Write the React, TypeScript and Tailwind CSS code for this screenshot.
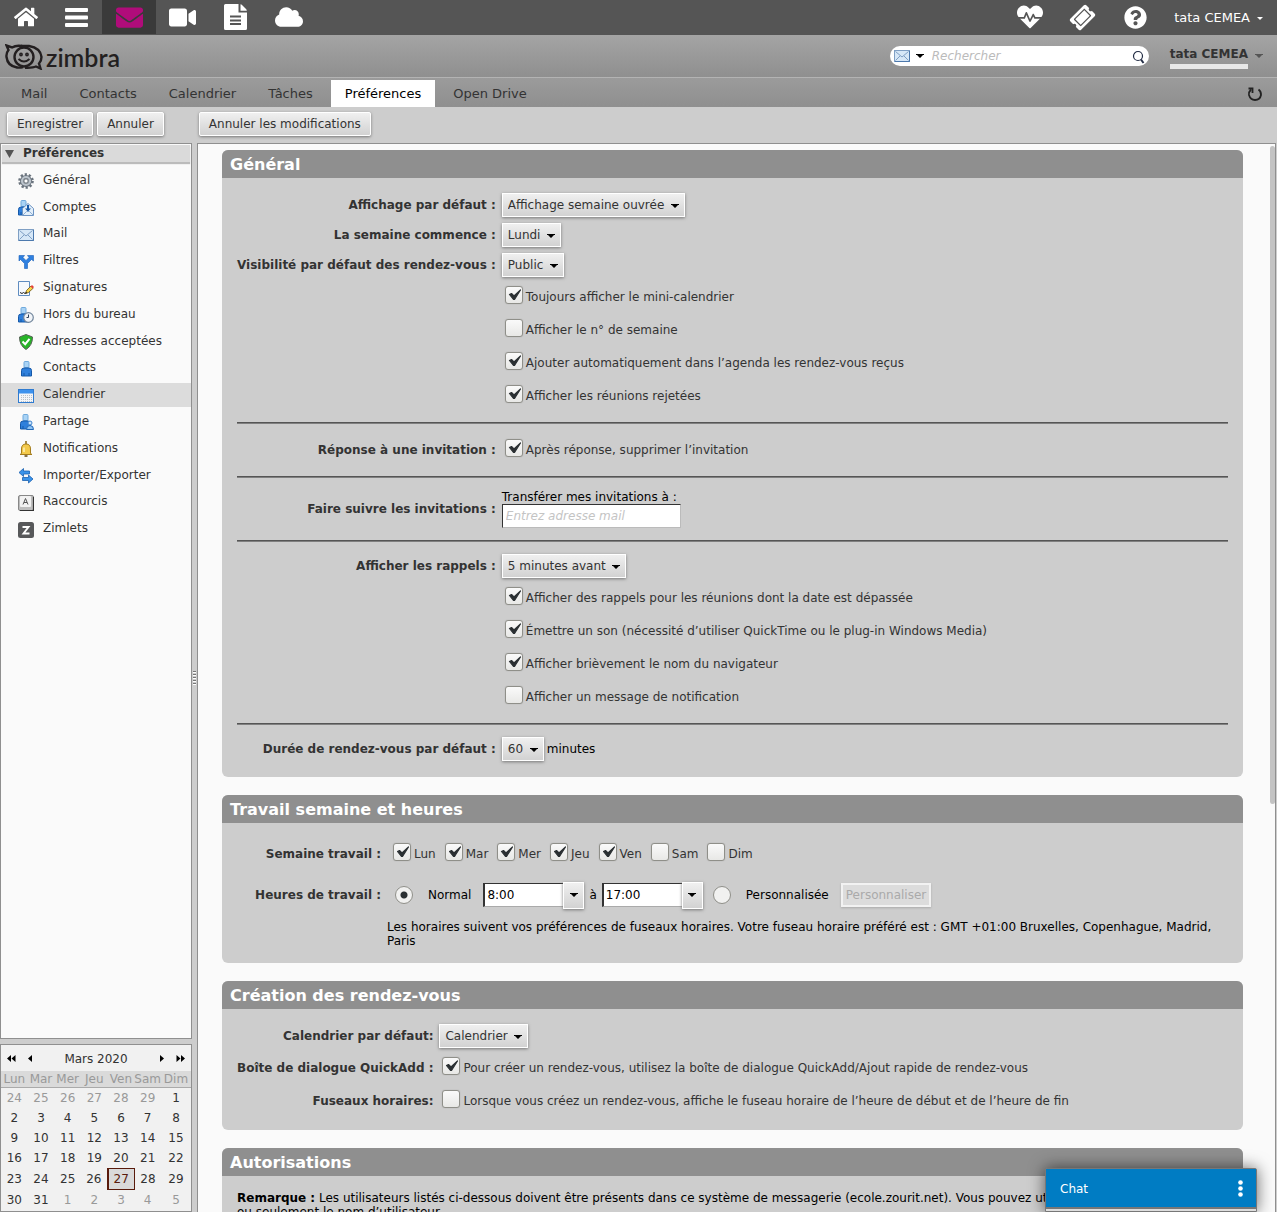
import type { ReactNode } from "react";
import {
  FaBars,
  FaCloud,
  FaEnvelope,
  FaHeartbeat,
  FaHome,
  FaQuestionCircle,
  FaTicketAlt,
  FaVideo,
} from "react-icons/fa";

const tabs = ["Mail", "Contacts", "Calendrier", "Tâches", "Préférences", "Open Drive"];

const weekDays = ["Lun", "Mar", "Mer", "Jeu", "Ven", "Sam", "Dim"];

const weeks = [
  [24, 25, 26, 27, 28, 29, 1],
  [2, 3, 4, 5, 6, 7, 8],
  [9, 10, 11, 12, 13, 14, 15],
  [16, 17, 18, 19, 20, 21, 22],
  [23, 24, 25, 26, 27, 28, 29],
  [30, 31, 1, 2, 3, 4, 5],
];

function Person({ x = 3 }: { x?: number }) {
  return (
    <g transform={`translate(${x} 0)`}>
      <rect x="3" y="0.5" width="5" height="6" rx="1" fill="#a9d3f5" stroke="#6fa9dc" />
      <path d="M0.5 15V9.5Q0.5 7 3 7H8Q10.5 7 10.5 9.5V15Z" fill="#2f80dc" stroke="#1558a8" />
      <path d="M3 12V15M8 12V15" stroke="#1558a8" />
    </g>
  );
}

function Letter() {
  return (
    <g>
      <rect x="0.5" y="2.5" width="15" height="11" fill="#d6e7f7" stroke="#7f9fc4" />
      <path d="M1.5 3.5L8 9L14.5 3.5M1.5 12.5L6 8M14.5 12.5L10 8" fill="none" stroke="#7f9fc4" />
      <path d="M1 13.5H15.5V3" fill="none" stroke="#4d79ad" />
    </g>
  );
}

const menu: { label: string; icon: ReactNode }[] = [
  {
    label: "Général",
    icon: (
      <g>
        <circle cx="8" cy="8" r="6.5" fill="none" stroke="#6a737d" strokeWidth="2.6" strokeDasharray="2.2 1.88" />
        <circle cx="8" cy="8" r="4.3" fill="#fff" stroke="#6c757f" strokeWidth="3.4" />
        <circle cx="8" cy="8" r="4" fill="none" stroke="#bcc4cc" strokeWidth="2.2" />
        <circle cx="8" cy="8" r="2.2" fill="#fff" stroke="#59626c" />
      </g>
    ),
  },
  {
    label: "Comptes",
    icon: (
      <g>
        <Person x={0} />
        <path d="M4.5 8.5L10 3.5L15.5 8.5V15.5H4.5Z" fill="#e3effa" stroke="#6c93c2" />
        <path d="M5 15L8.5 11.5H11.5L15 15" fill="none" stroke="#8fb0d5" />
        <path d="M10 5V9" stroke="#1558a8" strokeWidth="2" />
        <path d="M7 8.5H13L10 11.5Z" fill="#1558a8" />
      </g>
    ),
  },
  { label: "Mail", icon: <Letter /> },
  {
    label: "Filtres",
    icon: (
      <path
        d="M1 1.5H6.5L5 3.5L8 6.5L11 3.5L9.5 1.5H15.5V7L13.5 5.5L9.5 9.5V14.5H6.5V9.5L2.5 5.5L1 7Z"
        fill="#2f80e0"
        stroke="#1a5fb8"
        strokeWidth="0.6"
      />
    ),
  },
  {
    label: "Signatures",
    icon: (
      <g>
        <path d="M0.5 0.5H11.5V14.5H0.5Z" fill="#f6f9fd" stroke="#5f8cc0" />
        <path d="M2 11.5L4 12.5L5.5 11.5L7 12.5L8.5 11.5" fill="none" stroke="#222" />
        <path d="M7.5 12.5L8.5 9.5L13 5L15.2 7.2L10.5 11.5Z" fill="#f7d44a" stroke="#6b5414" strokeWidth="0.8" />
        <path d="M12.5 5.5L14 4L16 6L14.5 7.5Z" fill="#e5403a" />
        <path d="M7.3 12.7L8 10.8L9.4 12Z" fill="#222" />
      </g>
    ),
  },
  {
    label: "Hors du bureau",
    icon: (
      <g>
        <Person x={0} />
        <circle cx="10.5" cy="10.5" r="4.8" fill="#f1f4f8" stroke="#72869c" strokeWidth="1.2" />
        <path d="M10.5 7.5V10.5H8.5" fill="none" stroke="#2b3f57" />
      </g>
    ),
  },
  {
    label: "Adresses acceptées",
    icon: (
      <g>
        <path d="M8 0.5L14.5 3Q14.5 11.5 8 15.5Q1.5 11.5 1.5 3Z" fill="#28b428" stroke="#566256" />
        <path d="M4.5 7.5L7.2 10.2L11.5 4.8" fill="none" stroke="#fff" strokeWidth="2" />
      </g>
    ),
  },
  { label: "Contacts", icon: <Person /> },
  {
    label: "Calendrier",
    icon: (
      <g>
        <rect x="0.5" y="1.5" width="15" height="13" fill="#f3f5f8" stroke="#2f7bd0" />
        <rect x="1" y="2" width="14" height="3.5" fill="#3d92ee" />
        <path d="M3 7.5H14M3 9.5H14M3 11.5H14M3 13.5H14" stroke="#b9c0c8" strokeDasharray="1 1" />
      </g>
    ),
  },
  {
    label: "Partage",
    icon: (
      <g>
        <Person x={2} />
        <circle cx="12" cy="9" r="2" fill="#cbe4fa" stroke="#3c82cf" />
        <path d="M8.5 15.5Q8.5 11.5 12 11.5Q15.5 11.5 15.5 15.5Z" fill="#8dc3f4" stroke="#2268b8" />
      </g>
    ),
  },
  {
    label: "Notifications",
    icon: (
      <g>
        <path d="M8 0V3" stroke="#8a6914" strokeWidth="1.5" />
        <path d="M3.5 12.5V8Q3.5 3 8 3Q12.5 3 12.5 8V12.5L14 13.5H2Z" fill="#f3c94a" stroke="#a57d1c" />
        <path d="M6 6.5V11" stroke="#fdf0ba" strokeWidth="1.5" />
        <path d="M6.5 15H9.5" stroke="#5c4510" strokeWidth="1.5" />
      </g>
    ),
  },
  {
    label: "Importer/Exporter",
    icon: (
      <g fill="#3a93ea" stroke="#1a5fae" strokeWidth="0.8">
        <path d="M1 4.5L5.5 0.5V3H11.5V6H5.5V8.5Z" />
        <path d="M15 11L10.5 7V9.5H4.5V12.5H10.5V15Z" />
      </g>
    ),
  },
  {
    label: "Raccourcis",
    icon: (
      <g>
        <rect x="0.5" y="0.5" width="15" height="15" rx="1.5" fill="#bdbdbd" stroke="#888" />
        <path d="M15.5 2V15.5H2" fill="none" stroke="#333" strokeWidth="1.2" />
        <rect x="2" y="1" width="11" height="11" rx="1" fill="#f2f2f2" />
        <path d="M5 9.5L7.5 3.5L10 9.5M6 7.5H9" fill="none" stroke="#555" />
      </g>
    ),
  },
  {
    label: "Zimlets",
    icon: (
      <g>
        <rect width="16" height="16" rx="2.5" fill="#57585a" />
        <path d="M4.5 5H10.5L5.5 11.5H11.5" fill="none" stroke="#fff" strokeWidth="1.9" />
      </g>
    ),
  },
];

function Caret({ className = "" }: { className?: string }) {
  return (
    <svg viewBox="0 0 8 4" className={`w-2 h-1 fill-current ${className}`} aria-hidden="true">
      <path d="M0 0H8V1H7L4 4L1 1H0Z" />
    </svg>
  );
}

function TopLink({ label, className = "w-[53px] text-white", children }: { label: string; className?: string; children: ReactNode }) {
  return (
    <a href="#" aria-label={label} className={`flex h-[34px] items-center justify-center ${className}`}>
      {children}
    </a>
  );
}

function PushButton({ children }: { children: ReactNode }) {
  return (
    <button className="h-6 border border-white bg-linear-to-b from-[#f0f0f0] to-[#d2d2d2] px-[9px] text-[#333] rounded-xs shadow-[0_1px_3px_#777]">
      {children}
    </button>
  );
}

function Select({ label, value }: { label: string; value: string }) {
  return (
    <span className="relative inline-flex">
      <select
        aria-label={label}
        className="h-6 appearance-none border border-white bg-linear-to-b from-[#f0f0f0] to-[#d2d2d2] pl-[5px] pr-[19px] text-[#333] shadow-[0_1px_3px_#777]"
      >
        <option>{value}</option>
      </select>
      <Caret className="pointer-events-none absolute right-[6px] top-[11px] text-black" />
    </span>
  );
}

function Check({ label, checked = false }: { label: string; checked?: boolean }) {
  return (
    <label className="flex items-center gap-[3px] text-[#333]">
      <span className="relative mb-[3px] flex">
        <input
          type="checkbox"
          defaultChecked={checked}
          className="peer size-[18px] appearance-none rounded-[3px] border border-[#8f8f89] bg-linear-to-b from-[#fafafa] to-[#e8e8e6] shadow-[0_0_1px_#999]"
        />
        <svg
          viewBox="0 0 18 18"
          className="pointer-events-none absolute inset-0 hidden size-[18px] peer-checked:block"
          aria-hidden="true"
        >
          <path
            d="M4.5 8.5L6.5 7.5L9 10L15.5 4L9.5 13.5H8.500Z"
            fill="#2b3033"
            stroke="#2b3033"
            strokeWidth="1.2"
            strokeLinejoin="round"
          />
        </svg>
      </span>
      {label}
    </label>
  );
}

function Radio({ label, checked = false }: { label: string; checked?: boolean }) {
  return (
    <label className="flex items-center gap-[15px]">
      <input
        type="radio"
        name="hours"
        defaultChecked={checked}
        className="size-[18px] appearance-none rounded-full border border-[#8f8f89] bg-[#f1f1f0] checked:bg-[radial-gradient(circle,#2b3033_3px,#f1f1f0_4px)]"
      />
      {label}
    </label>
  );
}

function TimeBox({ label, value }: { label: string; value: string }) {
  return (
    <span className="flex items-center">
      <input
        aria-label={label}
        defaultValue={value}
        className="h-6 w-20 border border-t-[#333] border-l-2 border-l-[#333] border-b-[#aaa] border-r-0 bg-white pl-[2px] text-black"
      />
      <button
        aria-label={`Choisir : ${label}`}
        className="flex h-[27px] w-[21px] items-center justify-center border border-white bg-linear-to-b from-[#f0f0f0] to-[#d2d2d2] text-black shadow-[0_1px_3px_#777]"
      >
        <Caret />
      </button>
    </span>
  );
}

function Section({ title, children }: { title: string; children: ReactNode }) {
  return (
    <section className="shrink-0 overflow-hidden rounded-md bg-[#cdcdcd]">
      <h2 className="h-7 bg-[#8f8f8f] px-2 text-[16px] leading-[29px] font-bold text-white">{title}</h2>
      {children}
    </section>
  );
}

function Row({ label = "", children }: { label?: string; children: ReactNode }) {
  return (
    <>
      <div className="flex items-center justify-end font-bold text-[#333]">{label}</div>
      {children}
    </>
  );
}

function Field({ children }: { children: ReactNode }) {
  return <div className="flex h-[30px] items-center gap-[3px]">{children}</div>;
}

function CheckField({ label, checked }: { label: string; checked?: boolean }) {
  return (
    <div className="flex h-[33px] items-center pl-[3px]">
      <Check label={label} checked={checked} />
    </div>
  );
}

function Separator() {
  return <hr className="col-span-2 mt-[10px] mb-[9px] h-[2px] border-t border-b border-t-[#555] border-b-[#808080]" />;
}

function TopBar() {
  return (
    <div className="flex h-[35px] shrink-0 justify-between bg-[#555]">
      <nav className="flex">
        <TopLink label="Accueil" className="w-[51px] text-white"><FaHome size={24} /></TopLink>
        <TopLink label="Menu" className="w-[51px] text-white">
          <svg viewBox="0 0 23 19" className="h-[19px] w-[23px] fill-current">
            <rect width="23" height="4" rx="1" />
            <rect y="7.5" width="23" height="4" rx="1" />
            <rect y="15" width="23" height="4" rx="1" />
          </svg>
        </TopLink>
        <TopLink label="Messagerie" className="w-[54px] bg-[#3a3a3a] text-[#b00c7a]"><FaEnvelope size={27} /></TopLink>
        <TopLink label="Visio"><FaVideo size={27} /></TopLink>
        <TopLink label="Documents">
          <svg viewBox="0 0 23 26" className="h-[26px] w-[23px]">
            <path d="M1.500 0H14.500V8.500H23V24.500Q23 26 21.500 26H1.500Q0 26 0 24.500V1.500Q0 0 1.500 0Z" fill="#fff" />
            <path d="M16.500 0.300Q17.500 0.500 18 1L22 5Q22.700 5.800 22.800 6.700H16.500Z" fill="#fff" />
            <path d="M6 12.500H17M6 16.500H17M6 20H17" stroke="#555" strokeWidth="2" />
          </svg>
        </TopLink>
        <TopLink label="Cloud"><FaCloud size={28} /></TopLink>
      </nav>
      <div className="flex items-start pr-[14px] text-white">
        <TopLink label="État"><FaHeartbeat size={26} /></TopLink>
        <TopLink label="Tickets"><FaTicketAlt size={23} className="-rotate-45" /></TopLink>
        <TopLink label="Aide"><FaQuestionCircle size={23} /></TopLink>
        <button className="ml-3 flex h-9 items-center gap-[7px] text-[13px]">
          tata CEMEA
          <svg viewBox="0 0 6 3" className="h-[3px] w-[6px] fill-current"><path d="M0 0H6L3 3Z" /></svg>
        </button>
      </div>
    </div>
  );
}

function Banner() {
  return (
    <header className="flex h-[43px] shrink-0 items-center justify-between border-b border-[#b3b3b3] bg-linear-to-b from-[#a4a4a4] to-[#8f8f8f] pl-[5px] pr-[14px]">
      <a href="#" className="mt-[2px] flex items-center gap-[3px] text-[#231f20]">
        <svg viewBox="0 0 38 26" className="h-[26px] w-[38px]" fill="none" stroke="currentColor" strokeWidth="2.4">
          <circle cx="19" cy="13" r="9.500" />
          <path d="M17 2Q11 1 7 3.500L1.500 1.500L3.500 6Q1 9 1.500 13Q2.500 22 12 23.500Q15 24 18 23" />
          <path d="M16 2H24Q35.500 4 36.500 13Q36.500 17 34 19.500L35.500 24.500L31 22.500Q28 24 20 23.700" />
          <circle cx="16" cy="10.500" r="0.700" fill="currentColor" />
          <circle cx="22" cy="10.500" r="0.700" fill="currentColor" />
          <path d="M13.500 15Q19 20 24.500 15" strokeWidth="2" />
        </svg>
        <span className="font-['Lato'] text-[25px] leading-[26px] font-semibold">zimbra</span>
      </a>
      <div className="flex items-center">
        <form className="flex h-5 w-[259px] items-center rounded-full bg-white px-1">
          <button type="button" aria-label="Type de recherche" className="flex items-center gap-[6px] text-black">
            <svg viewBox="0 0 16 16" className="size-4"><Letter /></svg>
            <Caret />
          </button>
          <input
            aria-label="Rechercher"
            placeholder="Rechercher"
            className="ml-2 min-w-0 flex-1 outline-none placeholder:text-[#bbb] placeholder:italic"
          />
          <button type="button" aria-label="Lancer la recherche" className="mt-[2px]">
            <svg viewBox="0 0 14 14" className="size-[14px]" fill="none" stroke="#222c44">
              <circle cx="7" cy="6" r="4.500" strokeWidth="1.200" />
              <path d="M10 9.500L12.500 13" strokeWidth="2" />
            </svg>
          </button>
        </form>
        <button className="ml-[21px] flex items-center gap-[7px] text-[#333]">
          <span className="mt-[3px] border-b-[5px] border-[#e8e8e8] pb-[3px] leading-[14px] font-bold">tata CEMEA</span>
          <Caret className="text-[#555]" />
        </button>
      </div>
    </header>
  );
}

function Tabs() {
  return (
    <div className="flex h-[29px] shrink-0 items-end justify-between bg-linear-to-b from-[#9b9b9b] to-[#8f8f8f] pl-[7px] pr-[14px] text-[13px]">
      <nav className="flex gap-1">
        {tabs.map((tab) => (
          <a
            key={tab}
            href="#"
            className={`h-[27px] px-[14px] leading-[27px] ${tab === "Préférences" ? "bg-white text-black" : "text-[#333]"}`}
          >
            {tab}
          </a>
        ))}
      </nav>
      <button aria-label="Actualiser" className="mb-[5px]">
        <svg viewBox="0 0 16 16" className="size-4" fill="none" stroke="#222" strokeWidth="1.800">
          <path d="M4 3.500Q1.500 6 2 9Q3.500 14 8 14Q13 14 14 9Q14.300 5.500 11.500 3.500" />
          <path d="M1.500 2.500H5.500V7" />
        </svg>
      </button>
    </div>
  );
}

function Sidebar() {
  return (
    <div className="flex min-h-0 flex-1 flex-col border border-[#8f8f8f] bg-[#fafafa]">
      <h1 className="m-px flex h-[17px] items-center gap-[9px] bg-[#dadada] pb-[2px] pl-[3px] font-bold text-[#333] shadow-[0_2px_1px_#bbb]">
        <svg viewBox="0 0 9 8" className="mt-[2px] h-2 w-[9px]"><path d="M0 0H9L4.500 8Z" fill="#555" /></svg>
        Préférences
      </h1>
      <nav className="mt-1 grid h-[375px] auto-rows-fr items-center">
        {menu.map(({ label, icon }) => (
          <a
            key={label}
            href="#"
            className={`flex h-6 items-center gap-[9px] pl-[17px] text-[#333] ${label === "Calendrier" ? "bg-[#dcdcdc]" : ""}`}
          >
            <svg viewBox="0 0 16 16" className="mt-[2px] size-4" aria-hidden="true">{icon}</svg>
            <span className="pb-px">{label}</span>
          </a>
        ))}
      </nav>
    </div>
  );
}

function Arrow({ double = false, flip = false }: { double?: boolean; flip?: boolean }) {
  return (
    <button aria-label={`${double ? "Année" : "Mois"} ${flip ? "suivant" : "précédent"}`} className={flip ? "rotate-180" : ""}>
      <svg viewBox="0 0 9 7" className="h-[7px] w-[9px]">
        <path d={double ? "M0 3.500L4 0V7ZM4.500 3.500L8.500 0V7Z" : "M2 3.500L6 0V7Z"} fill="#000" />
      </svg>
    </button>
  );
}

function MiniCalendar() {
  return (
    <div className="mt-[5px] flex shrink-0 flex-col border border-[#8f8f8f] bg-[#f1f1f1] pb-px text-[#333]">
      <div className="flex h-[26px] items-center justify-between px-[6px] pt-px">
        <div className="flex gap-[10px]"><Arrow double /><Arrow /></div>
        <span>Mars 2020</span>
        <div className="flex gap-[10px]"><Arrow flip /><Arrow double flip /></div>
      </div>
      <table className="h-[139px] w-full table-fixed border-collapse text-center">
        <thead>
          <tr className="h-4 border-b border-[#aaa] bg-[#dadada] text-[#999]">
            {weekDays.map((day) => (
              <th key={day} className="p-0 leading-4 font-normal last:w-[30px]">{day}</th>
            ))}
          </tr>
        </thead>
        <tbody>
          {weeks.map((week, row) => (
            <tr key={row}>
              {week.map((day, col) => {
                const outside = (row === 0 && day > 7) || (row === 5 && day < 8);
                const today = row === 4 && day === 27;
                return (
                  <td
                    key={col}
                    className={`p-0 leading-[14px] ${outside ? "text-[#999]" : ""} ${today ? "border border-l-2 border-[#591b0c] bg-[#dadada] text-[#591b0c]" : ""}`}
                  >
                    {day}
                  </td>
                );
              })}
            </tr>
          ))}
        </tbody>
      </table>
    </div>
  );
}

function Preferences() {
  return (
    <main className="flex min-w-0 flex-1 border border-b-0 border-[#8f8f8f] bg-[#fafafa]">
      <div className="flex min-w-0 flex-1 flex-col gap-[18px] overflow-hidden pt-[6px] pr-[27px] pl-6 text-black">
        <Section title="Général">
          <div className="grid grid-cols-[auto_1fr] gap-x-[6px] px-[15px] pt-3 pb-[13px]">
            <Row label="Affichage par défaut :">
              <Field><Select label="Affichage par défaut" value="Affichage semaine ouvrée" /></Field>
            </Row>
            <Row label="La semaine commence :">
              <Field><Select label="La semaine commence" value="Lundi" /></Field>
            </Row>
            <Row label="Visibilité par défaut des rendez-vous :">
              <Field><Select label="Visibilité par défaut" value="Public" /></Field>
            </Row>
            <Row><CheckField label="Toujours afficher le mini-calendrier" checked /></Row>
            <Row><CheckField label="Afficher le n° de semaine" /></Row>
            <Row><CheckField label="Ajouter automatiquement dans l’agenda les rendez-vous reçus" checked /></Row>
            <Row><CheckField label="Afficher les réunions rejetées" checked /></Row>
            <Separator />
            <Row label="Réponse à une invitation :">
              <CheckField label="Après réponse, supprimer l’invitation" checked />
            </Row>
            <Separator />
            <Row label="Faire suivre les invitations :">
              <label className="flex h-[43px] flex-col justify-center leading-[14px]">
                Transférer mes invitations à :
                <input
                  placeholder="Entrez adresse mail"
                  className="h-6 w-[179px] border border-t-[#333] border-r-[#bbb] border-b-[#bbb] border-l-[#333] bg-white px-[3px] placeholder:text-[#c4c4c4] placeholder:italic"
                />
              </label>
            </Row>
            <Separator />
            <Row label="Afficher les rappels :">
              <Field><Select label="Afficher les rappels" value="5 minutes avant" /></Field>
            </Row>
            <Row><CheckField label="Afficher des rappels pour les réunions dont la date est dépassée" checked /></Row>
            <Row><CheckField label="Émettre un son (nécessité d’utiliser QuickTime ou le plug-in Windows Media)" checked /></Row>
            <Row><CheckField label="Afficher brièvement le nom du navigateur" checked /></Row>
            <Row><CheckField label="Afficher un message de notification" /></Row>
            <Separator />
            <Row label="Durée de rendez-vous par défaut :">
              <Field><Select label="Durée de rendez-vous" value="60" />minutes</Field>
            </Row>
          </div>
        </Section>

        <Section title="Travail semaine et heures">
          <div className="grid grid-cols-[144px_1fr] gap-x-[6px] px-[15px] pt-[14px] pb-[15px]">
            <Row label="Semaine travail :">
              <div className="flex h-[33px] items-center gap-[9px] pl-[6px]">
                {weekDays.map((day, i) => (
                  <Check key={day} label={day} checked={i < 5} />
                ))}
              </div>
            </Row>
            <Row label="Heures de travail :">
              <div className="flex h-[50px] items-center pl-2">
                <Radio label="Normal" checked />
                <span className="ml-3 mr-[10px] flex items-center gap-[5px]">
                  <TimeBox label="Début" value="8:00" />
                  à
                  <TimeBox label="Fin" value="17:00" />
                </span>
                <Radio label="Personnalisée" />
                <button disabled className="ml-3 h-6 border-2 border-[#f2f2f2] bg-[#dcdcdc] px-[3px] text-[#aaa] shadow-[0_1px_2px_#aaa]">
                  Personnaliser
                </button>
              </div>
            </Row>
            <Row>
              <p className="leading-[14px]">
                Les horaires suivent vos préférences de fuseaux horaires. Votre fuseau horaire préféré est : GMT +01:00
                Bruxelles, Copenhague, Madrid, Paris
              </p>
            </Row>
          </div>
        </Section>

        <Section title="Création des rendez-vous">
          <div className="grid grid-cols-[auto_1fr] gap-x-[6px] px-[15px] pt-3 pb-[13px]">
            <Row label="Calendrier par défaut:">
              <Field><Select label="Calendrier par défaut" value="Calendrier" /></Field>
            </Row>
            <Row label="Boîte de dialogue QuickAdd :">
              <CheckField label="Pour créer un rendez-vous, utilisez la boîte de dialogue QuickAdd/Ajout rapide de rendez-vous" checked />
            </Row>
            <Row label="Fuseaux horaires:">
              <CheckField label="Lorsque vous créez un rendez-vous, affiche le fuseau horaire de l’heure de début et de l’heure de fin" />
            </Row>
          </div>
        </Section>

        <Section title="Autorisations">
          <p className="px-[15px] pt-[15px] pb-4 leading-[14px]">
            <b>Remarque :</b> Les utilisateurs listés ci-dessous doivent être présents dans ce système de messagerie
            (ecole.zourit.net). Vous pouvez utiliser l’adresse complète
            <br />
            ou seulement le nom d’utilisateur.
          </p>
        </Section>
      </div>
      <div className="w-[5px] shrink-0 pt-[2px]">
        <div className="h-[658px] rounded-full bg-[#c3c3c3]" />
      </div>
    </main>
  );
}

export default function App() {
  return (
    <div className="relative flex h-screen flex-col overflow-hidden bg-[#cdcdcd] font-['DejaVu_Sans',sans-serif] text-[12px] leading-4">
      <TopBar />
      <Banner />
      <Tabs />
      <div className="flex h-9 shrink-0 items-center pb-[2px] pl-[7px]">
        <PushButton>Enregistrer</PushButton>
        <span className="ml-1 mr-[35px]"><PushButton>Annuler</PushButton></span>
        <PushButton>Annuler les modifications</PushButton>
      </div>
      <div className="flex min-h-0 flex-1 pr-px">
        <aside className="flex w-48 shrink-0 flex-col">
          <Sidebar />
          <MiniCalendar />
        </aside>
        <div className="flex w-[5px] shrink-0 items-center justify-center">
          <svg viewBox="0 0 3 14" className="h-[14px] w-[3px]">
            <path d="M0 1.500H3M0 4.500H3M0 7.500H3M0 10.500H3M0 13.500H3" stroke="#fff" />
            <path d="M0 0.500H3M0 3.500H3M0 6.500H3M0 9.500H3M0 12.500H3" stroke="#777" />
          </svg>
        </div>
        <Preferences />
      </div>
      <div className="absolute right-5 bottom-0 flex h-11 w-[212px] flex-col rounded-t-xs border border-[#777] bg-[#ddd] shadow-[0_0_16px_#0009]">
        <button className="flex h-10 items-center justify-between border-b-2 border-[#777] bg-[#007cc3] pt-px pl-[14px] pr-[13px] text-white">
          Chat
          <svg viewBox="0 0 5 17" className="h-[17px] w-[5px] fill-white">
            <circle cx="2.500" cy="2.500" r="2.300" />
            <circle cx="2.500" cy="8.500" r="2.300" />
            <circle cx="2.500" cy="14.500" r="2.300" />
          </svg>
        </button>
      </div>
    </div>
  );
}
